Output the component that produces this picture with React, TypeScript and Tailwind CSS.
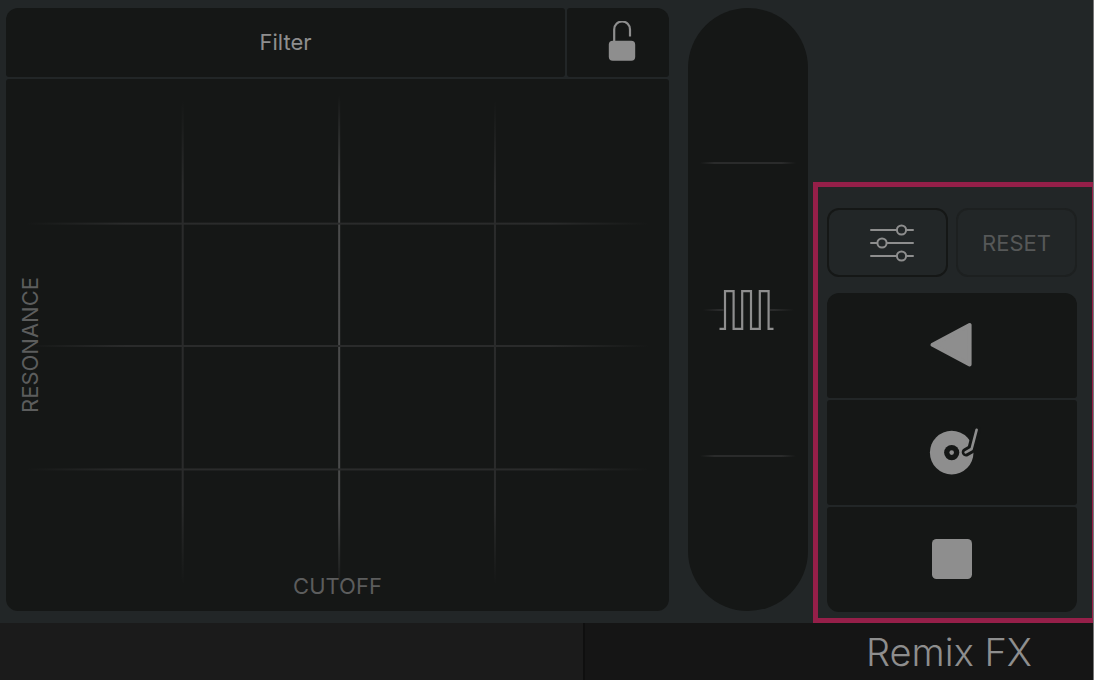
import { useState } from "react";

function LockOpenIcon() {
  return (
    <svg width="28" height="40" viewBox="0 0 28 40" aria-hidden="true">
      <path d="M6.2 22V8.4a7.9 7.9 0 0 1 15.8 0V15.5" fill="none" stroke="#8e8e8e" strokeWidth="2.2" strokeLinecap="butt" />
      <rect x="0.8" y="19.8" width="26.4" height="20" rx="4" fill="#8e8e8e" />
    </svg>
  );
}

function SlidersIcon() {
  const rows = [
    { y: 7, knob: 32.5 },
    { y: 20, knob: 13 },
    { y: 33, knob: 32.5 },
  ];
  return (
    <svg width="46" height="40" viewBox="0 0 46 40" aria-hidden="true">
      {rows.map((row) => (
        <g key={row.y} stroke="#8e8e8e" strokeWidth="2">
          <path d={`M2 ${row.y}H44`} strokeLinecap="round" />
          <circle cx={row.knob} cy={row.y} r="4.6" fill="#222627" />
        </g>
      ))}
    </svg>
  );
}

function ReverseIcon() {
  return (
    <svg width="44" height="46" viewBox="0 0 44 46" aria-hidden="true">
      <path d="M2.6 22.8 39.6 3V42.6Z" fill="#8e8e8e" stroke="#8e8e8e" strokeWidth="4" strokeLinejoin="round" />
    </svg>
  );
}

function TurntableIcon() {
  return (
    <svg width="46" height="46" viewBox="0 0 46 46" className="overflow-visible" aria-hidden="true">
      <circle cx="22.7" cy="23.6" r="21.8" fill="#8e8e8e" />
      <circle cx="22.7" cy="23.6" r="7.6" fill="#151716" />
      <circle cx="22.7" cy="23.6" r="2.3" fill="#8e8e8e" />
      <path d="M47.6 0.8 42.6 20 37 23.2" fill="none" stroke="#151716" strokeWidth="8.6" strokeLinecap="round" strokeLinejoin="round" />
      <path d="M47.6 0.8 42.6 20 36.6 23.4" fill="none" stroke="#8e8e8e" strokeWidth="2.6" strokeLinecap="round" strokeLinejoin="round" />
    </svg>
  );
}

function StopIcon() {
  return (
    <svg width="40" height="40" viewBox="0 0 40 40" aria-hidden="true">
      <rect width="40" height="40" rx="4.5" fill="#8e8e8e" />
    </svg>
  );
}

function GateWaveIcon() {
  return (
    <svg width="55" height="42" viewBox="0 0 55 42" aria-hidden="true">
      <path
        d="M0.5 39.8H6V2.2H14.6V39.8H23.2V2.2H32V39.8H40.8V2.2H49.6V39.8H54.5"
        fill="none"
        stroke="#8e8e8e"
        strokeWidth="2.2"
      />
      <path d="M0 21H5M51 21H55" stroke="#2a2b2b" strokeWidth="2" />
    </svg>
  );
}

function PadGrid() {
  return (
    <svg className="absolute inset-0 h-full w-full" aria-hidden="true">
      <defs>
        <linearGradient id="fade-x">
          <stop offset="0.03" stopColor="#2a2b2b" stopOpacity="0" />
          <stop offset="0.18" stopColor="#2a2b2b" />
          <stop offset="0.82" stopColor="#2a2b2b" />
          <stop offset="0.97" stopColor="#2a2b2b" stopOpacity="0" />
        </linearGradient>
        <linearGradient id="fade-y" x2="0" y2="1">
          <stop offset="0.04" stopColor="#2a2b2b" stopOpacity="0" />
          <stop offset="0.2" stopColor="#2a2b2b" />
          <stop offset="0.8" stopColor="#2a2b2b" />
          <stop offset="0.95" stopColor="#2a2b2b" stopOpacity="0" />
        </linearGradient>
        <linearGradient id="fade-center" x2="0" y2="1">
          <stop offset="0.03" stopColor="#4a4b4b" stopOpacity="0" />
          <stop offset="0.22" stopColor="#4a4b4b" />
          <stop offset="0.8" stopColor="#4a4b4b" />
          <stop offset="0.96" stopColor="#4a4b4b" stopOpacity="0" />
        </linearGradient>
      </defs>
      <rect x="26.5%" y="0" width="2" height="100%" fill="url(#fade-y)" />
      <rect x="50.1%" y="0" width="2" height="100%" fill="url(#fade-center)" />
      <rect x="73.6%" y="0" width="2" height="100%" fill="url(#fade-y)" />
      <rect x="0" y="27%" width="100%" height="2" fill="url(#fade-x)" />
      <rect x="0" y="50%" width="100%" height="2" fill="url(#fade-x)" />
      <rect x="0" y="73.2%" width="100%" height="2" fill="url(#fade-x)" />
    </svg>
  );
}

function FilterPad() {
  const [locked, setLocked] = useState(false);
  return (
    <section className="flex min-w-0 flex-1 flex-col gap-0.5">
      <div className="flex h-[69px] gap-0.5">
        <button
          type="button"
          className="flex-1 rounded-[3px] rounded-tl-xl bg-[#151716] pb-0.5 text-[22px] leading-7 text-[#8e8e8e]"
        >
          Filter
        </button>
        <button
          type="button"
          aria-label="Lock"
          aria-pressed={locked}
          onClick={() => setLocked(!locked)}
          className="flex w-[102px] items-center justify-center rounded-[3px] rounded-tr-xl bg-[#151716] pb-1 pl-2"
        >
          <LockOpenIcon />
        </button>
      </div>
      <div className="relative grid flex-1 rounded-[3px] rounded-b-xl bg-[#151716] text-[22px] leading-7 text-[#5c5d5d]">
        <PadGrid />
        <input id="resonance" type="range" className="sr-only" />
        <input id="cutoff" type="range" className="sr-only" />
        <label
          htmlFor="resonance"
          className="relative col-start-1 row-start-1 ml-2.5 rotate-180 self-center justify-self-start [writing-mode:vertical-rl]"
        >
          RESONANCE
        </label>
        <label htmlFor="cutoff" className="relative col-start-1 row-start-1 self-end justify-self-center pb-[11px]">
          CUTOFF
        </label>
      </div>
    </section>
  );
}

function StripMark() {
  return <div className="h-0.5 w-24 bg-[linear-gradient(to_right,transparent,#2a2b2b_15%,#2a2b2b_85%,transparent)]" />;
}

function RepeaterStrip() {
  return (
    <section className="relative flex w-[120px] flex-col items-center justify-between rounded-full bg-[#151716] py-[154px]">
      <StripMark />
      <div className="flex items-center">
        <div className="h-0.5 w-4 bg-linear-to-r from-transparent to-[#2a2b2b]" />
        <GateWaveIcon />
        <div className="h-0.5 w-5 bg-linear-to-l from-transparent to-[#2a2b2b]" />
      </div>
      <StripMark />
      <input type="range" aria-label="Gate" className="absolute inset-0 h-full w-full opacity-0" />
    </section>
  );
}

const transport = [
  { label: "Reverse", icon: <ReverseIcon />, shape: "rounded-[3px] rounded-t-xl" },
  { label: "Scratch", icon: <TurntableIcon />, shape: "rounded-[3px]" },
  { label: "Tape stop", icon: <StopIcon />, shape: "rounded-[3px] rounded-b-xl" },
];

function TransportPanel() {
  return (
    <section className="flex h-[441px] w-[280px] flex-col gap-4 self-end border-5 border-r-1 border-[#951f49] pt-[21px] pr-[15px] pb-[6px] pl-[9px]">
      <div className="grid h-[69px] grid-cols-2 gap-2">
        <button
          type="button"
          aria-label="Settings"
          className="flex items-center justify-center rounded-xl border-2 border-[#151716] pl-2"
        >
          <SlidersIcon />
        </button>
        <button type="button" className="rounded-xl border-2 border-[#1d2020] text-[22px] leading-7 text-[#565858]">
          RESET
        </button>
      </div>
      <div className="flex flex-1 flex-col gap-0.5">
        {transport.map((item) => (
          <button
            key={item.label}
            type="button"
            aria-label={item.label}
            className={`flex flex-1 items-center justify-center bg-[#151716] pb-0.5 ${item.shape}`}
          >
            {item.icon}
          </button>
        ))}
      </div>
    </section>
  );
}

export default function App() {
  return (
    <div className="flex min-h-screen flex-col border-r border-[#777777] bg-[#222627] font-['Inter',sans-serif]">
      <main className="flex flex-1 pl-1.5">
        <div className="flex flex-1 gap-[19px] pt-2 pb-3">
          <FilterPad />
          <RepeaterStrip />
        </div>
        <div className="flex pl-[5px]">
          <TransportPanel />
        </div>
      </main>
      <footer className="flex h-[57px] bg-[#151515]">
        <div className="flex-1 border-r-2 border-[#0f0f0f] bg-[#1b1b1b]" />
        <div className="flex w-[508px] items-center justify-end pr-[61px]">
          <h1 className="text-[38px] leading-12 font-light text-[#8e8e8e]">Remix FX</h1>
        </div>
      </footer>
    </div>
  );
}
